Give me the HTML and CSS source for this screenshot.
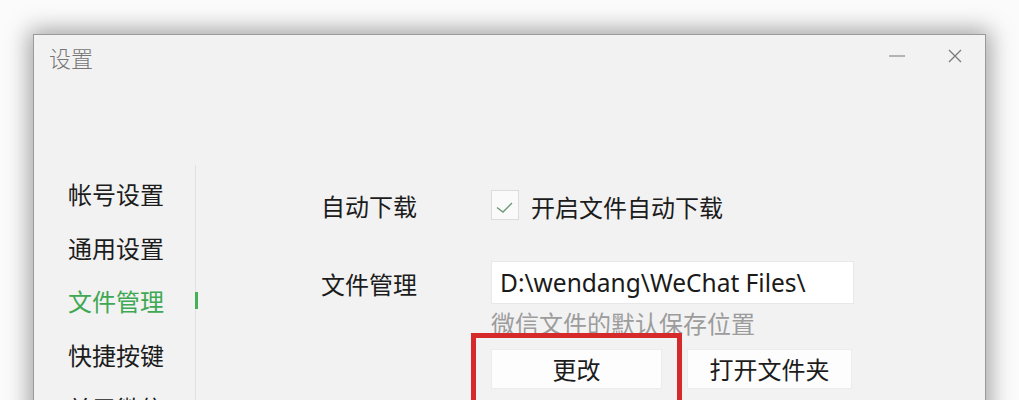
FILE: index.html
```html
<!DOCTYPE html>
<html lang="zh">
<head>
<meta charset="utf-8">
<title>设置</title>
<link rel="stylesheet" href="styles.css">
</head>
<body>
<div class="window">
  <div class="titlebar">
    <div class="title">设置</div>
    <div class="controls">
      <span class="ctl min"><svg width="16" height="4" viewBox="0 0 16 4"><line x1="0" y1="2" x2="16" y2="2" stroke="#8a8a8a" stroke-width="1.2"/></svg></span>
      <span class="ctl close"><svg width="14" height="14" viewBox="0 0 14 14"><path d="M1 1L13 13M13 1L1 13" stroke="#7a7a7a" stroke-width="1.3" fill="none"/></svg></span>
    </div>
  </div>
  <div class="content">
    <nav class="sidebar">
      <div class="nav-item">帐号设置</div>
      <div class="nav-item">通用设置</div>
      <div class="nav-item active">文件管理<span class="indicator"></span></div>
      <div class="nav-item">快捷按键</div>
      <div class="nav-item">关于微信</div>
    </nav>
    <main class="main">
      <div class="row row-auto">
        <div class="label">自动下载</div>
        <label class="check">
          <span class="box"><svg width="28" height="30" viewBox="0 0 28 30"><path d="M6 17.5L12 22L21 13" stroke="#6b9a78" stroke-width="1.4" fill="none"/></svg></span>
          <span class="check-text">开启文件自动下载</span>
        </label>
      </div>
      <div class="row row-path">
        <div class="label">文件管理</div>
        <div class="field">
          <div class="path">D:\wendang\WeChat Files\</div>
          <div class="hint">微信文件的默认保存位置</div>
          <div class="buttons">
            <button class="btn">更改</button>
            <button class="btn">打开文件夹</button>
            <span class="highlight"></span>
          </div>
        </div>
      </div>
    </main>
  </div>
</div>
</body>
</html>
```

FILE: styles.css
```css
html, body {
  margin: 0;
  padding: 0;
}
body {
  width: 1019px;
  height: 400px;
  overflow: hidden;
  background: #fbfbfb;
  font-family: "Noto Sans CJK SC", "Noto Sans", sans-serif;
  color: #1c1c1c;
}
.window {
  margin: 34px 0 0 33px;
  width: 953px;
  height: 420px;
  background: #f2f2f2;
  border: 1px solid #9a9a9a;
  border-bottom: none;
  box-shadow: 0 0 22px 4px rgba(0, 0, 0, 0.36);
  box-sizing: border-box;
}
.titlebar {
  display: flex;
  justify-content: space-between;
  align-items: flex-start;
  height: 130px;
  padding: 6px 0 0 15px;
  box-sizing: border-box;
}
.title {
  font-size: 22px;
  line-height: 32px;
  color: #767676;
  font-weight: 300;
}
.controls {
  display: flex;
  align-items: center;
  gap: 43px;
  padding: 5px 23px 0 0;
}
.ctl {
  display: flex;
  align-items: center;
  justify-content: center;
  height: 20px;
}
.content {
  display: flex;
}
.sidebar {
  width: 162px;
  padding: 2px 0 0 34px;
  box-sizing: border-box;
  border-right: 1px solid #e2e2e2;
  height: 280px;
}
.nav-item {
  position: relative;
  font-size: 24px;
  line-height: 53.5px;
  height: 53.5px;
  color: #1c1c1c;
}
.nav-item.active {
  color: #3fa852;
}
.indicator {
  position: absolute;
  right: -3px;
  top: 18px;
  width: 3px;
  height: 17px;
  background: #45b058;
}
.main {
  padding: 23px 0 0 125px;
  flex: 1;
}
.row {
  display: flex;
}
.label {
  width: 170px;
  font-size: 24px;
  line-height: 30px;
  flex: none;
}
.row-auto .label {
  padding-top: 3px;
}
.check {
  display: flex;
  align-items: center;
  gap: 12px;
}
.box {
  width: 28px;
  height: 30px;
  background: #fafafa;
  border: 1px solid #dcdcdc;
  box-sizing: border-box;
  display: flex;
}
.box svg {
  margin: -1px;
}
.check-text {
  font-size: 24px;
  line-height: 30px;
  padding-top: 4px;
}
.row-path {
  margin-top: 39px;
}
.row-path .label {
  padding-top: 8px;
}
.field {
  display: flex;
  flex-direction: column;
}
.path {
  width: 363px;
  height: 43px;
  background: #ffffff;
  border: 1px solid #e8e8e8;
  box-sizing: border-box;
  font-family: "Noto Sans", "Open Sans", sans-serif;
  font-size: 24.5px;
  line-height: 41px;
  padding-left: 8px;
  color: #1a1a1a;
}
.hint {
  font-size: 24px;
  line-height: 28px;
  margin-top: 5px;
  color: #9c9c9c;
}
.buttons {
  position: relative;
  display: flex;
  gap: 25px;
  margin-top: 12px;
}
.btn {
  width: 171px;
  height: 40px;
  background: #fdfdfd;
  border: 1px solid #ececec;
  font-family: "Noto Sans CJK SC", sans-serif;
  font-size: 24px;
  line-height: 38px;
  padding: 0;
  color: #1c1c1c;
}
.btn + .btn {
  width: 165px;
}
.highlight {
  position: absolute;
  left: -20px;
  top: -16px;
  width: 211px;
  height: 120px;
  border: 5px solid #d62a2a;
  box-sizing: border-box;
}
```
